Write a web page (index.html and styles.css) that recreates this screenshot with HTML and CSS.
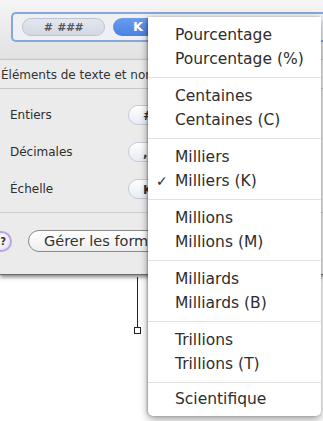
FILE: index.html
```html
<!DOCTYPE html>
<html lang="fr">

<head>
  <meta charset="UTF-8" />
  <meta name="viewport" content="width=device-width, initial-scale=1.0" />
  <title>Format des nombres</title>
  <link rel="stylesheet" href="styles.css">
</head>

<body>
  <div class="fenetre">
    <div class="barre">
      <div class="champ">
        <span class="jeton">#&nbsp;###</span>
        <span class="jeton actif">K</span>
      </div>
    </div>

    <div class="section">
      <p class="titre">Éléments de texte et nombres</p>
      <div class="ligne">
        <span class="etiquette">Entiers</span>
        <span class="valeur">#</span>
      </div>
      <div class="ligne">
        <span class="etiquette">Décimales</span>
        <span class="valeur">,</span>
      </div>
      <div class="ligne">
        <span class="etiquette">Échelle</span>
        <span class="valeur">K</span>
      </div>
      <div class="pied">
        <span class="aide">?</span>
        <button class="gerer">Gérer les formats…</button>
      </div>
    </div>
  </div>

  <div class="attache">
    <div class="trait"></div>
    <div class="poignee"></div>
  </div>

  <ul class="menu">
    <li class="groupe">
      <span>Pourcentage</span>
      <span>Pourcentage (%)</span>
    </li>
    <li class="groupe">
      <span>Centaines</span>
      <span>Centaines (C)</span>
    </li>
    <li class="groupe">
      <span>Milliers</span>
      <span class="coche">Milliers (K)</span>
    </li>
    <li class="groupe">
      <span>Millions</span>
      <span>Millions (M)</span>
    </li>
    <li class="groupe">
      <span>Milliards</span>
      <span>Milliards (B)</span>
    </li>
    <li class="groupe">
      <span>Trillions</span>
      <span>Trillions (T)</span>
    </li>
    <li class="groupe dernier">
      <span>Scientifique</span>
    </li>
  </ul>
</body>

</html>
```

FILE: styles.css
```css
body {
  margin: 0;
  width: 323px;
  height: 421px;
  overflow: hidden;
  position: relative;
  background-color: #ffffff;
  font-family: "DejaVu Sans", sans-serif;
  color: #333;
}

.fenetre {
  width: 323px;
}

.barre {
  height: 60px;
  padding-top: 12px;
  box-sizing: border-box;
  background: linear-gradient(#f6f6f6 0, #f2f2f2 10px, #e6e6e6 44px, #e3e3e3 60px);
  border-bottom: 1px solid #d2d2d2;
}

.champ {
  margin-left: 11px;
  height: 30px;
  box-sizing: border-box;
  border: 2px solid #86a8d8;
  border-right: none;
  border-radius: 5px 0 0 5px;
  background-color: #eef0f4;
  display: flex;
  align-items: center;
  gap: 8px;
  padding-left: 9px;
}

.jeton {
  height: 18px;
  line-height: 18px;
  border-radius: 9px;
  box-sizing: border-box;
  font-size: 11px;
  font-style: italic;
  font-weight: bold;
  color: #555;
  text-align: center;
}

.jeton:first-child {
  width: 83px;
  background: linear-gradient(#e4e7ef, #d3d8e4);
  border: 1px solid #bcc3d4;
  letter-spacing: 1px;
}

.jeton.actif {
  width: 70px;
  background: linear-gradient(#6a9cf0, #4a82e2);
  color: #ffffff;
  font-style: normal;
  font-size: 13px;
  text-align: left;
  padding-left: 20px;
}

.section {
  background-color: #ebebeb;
  border-bottom: 1px solid #6a6a6a;
  box-shadow: 0 2px 4px rgba(0, 0, 0, 0.5);
  padding-bottom: 22px;
}

.titre {
  margin: 0;
  padding: 8px 0 6px 1px;
  font-size: 12px;
  line-height: 14px;
  white-space: nowrap;
  overflow: hidden;
  color: #333;
  border-bottom: 1px solid #c6c6c6;
}

.ligne {
  height: 37px;
  display: flex;
  align-items: center;
  padding-left: 10px;
}

.ligne:first-of-type {
  margin-top: 7px;
}

.etiquette {
  width: 118px;
  font-size: 12px;
  color: #2e2e2e;
}

.valeur {
  width: 120px;
  height: 20px;
  line-height: 20px;
  border-radius: 10px;
  border: 1px solid #c4cad8;
  background: linear-gradient(#ffffff, #e8ecf4);
  box-sizing: border-box;
  padding-left: 14px;
  font-size: 12px;
  font-weight: bold;
  color: #333;
}

.pied {
  margin-top: 5px;
  border-top: 1px solid #cdcdcd;
  padding-top: 17px;
  display: flex;
  align-items: center;
  gap: 16px;
}

.aide {
  width: 21px;
  height: 21px;
  margin-left: -9px;
  border-radius: 50%;
  border: 2px solid #b8a6e2;
  background: radial-gradient(circle at 50% 40%, #ffffff, #e2daf4);
  box-sizing: border-box;
  font-size: 10px;
  font-weight: bold;
  line-height: 17px;
  text-align: right;
  padding-right: 4px;
  color: #333;
}

.gerer {
  width: 170px;
  height: 22px;
  border: 1px solid #8a8a8a;
  border-radius: 11px;
  background: linear-gradient(#ffffff, #eeeeee);
  font-family: "DejaVu Sans", sans-serif;
  font-size: 14.5px;
  color: #333;
  text-align: left;
  padding: 0 0 0 15px;
  white-space: nowrap;
}

.attache {
  margin-left: 134px;
  padding-top: 2px;
}

.trait {
  width: 1px;
  height: 50px;
  margin-left: 3px;
  background-color: #222;
}

.poignee {
  width: 7px;
  height: 7px;
  box-sizing: border-box;
  border: 1px solid #222;
  background-color: #fff;
}

.menu {
  position: absolute;
  left: 148px;
  top: 17px;
  width: 173px;
  margin: 0;
  padding: 0;
  list-style: none;
  background-color: #ffffff;
  border-radius: 0 0 5px 5px;
  box-shadow: 0 3px 9px rgba(0, 0, 0, 0.4), -1px 0 2px rgba(0, 0, 0, 0.25);
}

.groupe {
  padding: 6px 0;
  border-bottom: 1px solid #e2e2e2;
  display: flex;
  flex-direction: column;
}

.groupe span {
  line-height: 24px;
  font-size: 15.5px;
  padding-left: 27px;
  white-space: nowrap;
  position: relative;
  color: #2e2e2e;
}

.groupe.dernier {
  border-bottom: none;
  padding: 4px 0 5px;
}

.coche::before {
  content: "✓";
  position: absolute;
  left: 8px;
  font-size: 14px;
}
```
